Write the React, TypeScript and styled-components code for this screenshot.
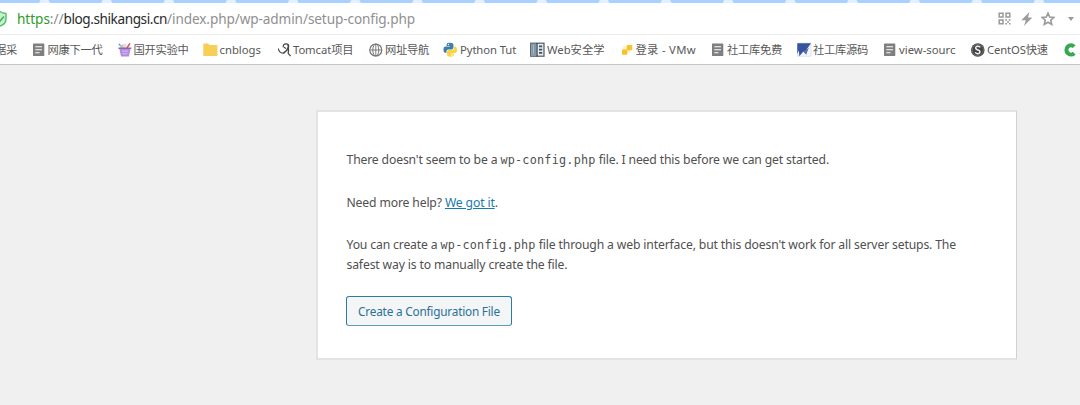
import React from "react";
import styled, { createGlobalStyle } from "styled-components";

const Global = createGlobalStyle`
  * { box-sizing: border-box; }
  body { margin: 0; background: #f0f0f0; overflow: hidden; font-family: "Noto Sans", "Noto Sans CJK SC", sans-serif; }
`;
const Page = styled.div`
  width: 1080px;
  height: 405px;
  overflow: hidden;
  background: #f0f0f0;
`;
const TabStrip = styled.div`
  height: 3px;
  background: #e3f0ff;
  svg { display: block; }
`;
const AddressBar = styled.div`
  height: 32px;
  display: flex;
  align-items: center;
  justify-content: space-between;
  background: #fff;
  border-bottom: 1px solid #ebebeb;
  padding-right: 6px;
`;
const AddressLeft = styled.div`
  display: flex;
  align-items: center;
`;
const Url = styled.div`
  margin-left: 10px;
  font-size: 13.6px;
  line-height: 20px;
  white-space: nowrap;
`;
const UrlPart = styled.span<{ $color: string; $track: number }>`
  color: ${(p) => p.$color};
  letter-spacing: ${(p) => p.$track}px;
`;
const Actions = styled.div`
  display: flex;
  align-items: center;
`;
const Bookmarks = styled.div`
  height: 30px;
  display: flex;
  align-items: center;
  background: #fff;
  border-bottom: 1px solid #c6c6c6;
`;
const Bookmark = styled.div<{ $width: number }>`
  flex: 0 0 ${(p) => p.$width}px;
  display: flex;
  align-items: center;
`;
const IconSlot = styled.span<{ $width: number }>`
  flex: 0 0 ${(p) => p.$width}px;
  height: 16px;
  display: flex;
  align-items: center;
`;
const Label = styled.span<{ $track: number }>`
  font-size: 11.3px;
  line-height: 16px;
  white-space: nowrap;
  color: #585858;
  letter-spacing: ${(p) => p.$track}px;
`;
const ScrolledLabel = styled(Label)`
  margin-left: -5px;
`;
const Card = styled.main`
  width: 701px;
  height: 250px;
  margin: 45px 0 0 316px;
  padding: 37px 29px 0 28px;
  background: #fff;
  border: 2px solid #e1e3e4;
  border-right: 1px solid #cfd2d4;
`;
const Paragraph = styled.p<{ $gap: number; $line?: number; $track?: number }>`
  margin: 0 0 ${(p) => p.$gap}px 0.5px;
  font-size: 12.2px;
  line-height: ${(p) => p.$line ?? 21}px;
  letter-spacing: ${(p) => p.$track ?? -0.15}px;
  white-space: nowrap;
  color: #505050;
`;
const Code = styled.code`
  font-family: "DejaVu Sans Mono", monospace;
  font-size: 11.8px;
  line-height: 1;
  letter-spacing: 0.22px;
`;
const Link = styled.a`
  color: #1a7aae;
  text-decoration: underline;
`;
const Button = styled.button`
  display: block;
  width: 166px;
  height: 30px;
  padding: 0;
  border: 1px solid #2b7ca3;
  border-bottom-color: #5b9bb9;
  border-radius: 3px;
  background: #f3f5f7;
  color: #2a7196;
  font: 11.8px/28px "Noto Sans", sans-serif;
  letter-spacing: -0.21px;
  white-space: nowrap;
`;

const Tabs = () => (
  <svg width="1080" height="3">
    {Array.from({ length: 19 }, (_, i) => {
      const x = -12 + i * 62.15;
      return <path key={i} d={`M${x - 1.5} 0H${x + 52.5}L${x + 51} 3H${x}Z`} fill="#a9d1ff" />;
    })}
  </svg>
);
const Shield = () => (
  <svg width="7" height="18" viewBox="0 0 7 18">
    <path d="M-6 3Q-2 3 0 1.5Q2 3 6 3.5V9Q6 14 0 16Q-6 14-6 9Z" fill="#c8f0cf" stroke="#55be68" strokeWidth="1.4" />
    <path d="M-3 8L0 11L4 6.5" fill="none" stroke="#45b55a" strokeWidth="1.6" />
  </svg>
);
const QrIcon = () => (
  <svg width="13" height="13" viewBox="0 0 13 13" fill="none" stroke="#999" strokeWidth="1.5">
    <path d="M1.2 1.2H5V5H1.2ZM8 1.2H11.8V5H8ZM1.2 8H5V11.8H1.2Z" />
    <path d="M7.2 8H9M10.7 8H12.5M9 9.9H11M7.2 11.8H9M11 11.8H12.5" />
  </svg>
);
const Bolt = () => (
  <svg width="12" height="14" viewBox="0 0 12 14">
    <path d="M8.4 0L.3 8.2H4.8L3 14L11.3 5.4H7Z" fill="#9c9c9c" />
  </svg>
);
const Star = () => (
  <svg width="14" height="14" viewBox="0 0 14 14">
    <path d="M7 1.2L8.7 5L12.9 5.4L9.8 8.2L10.7 12.4L7 10.2L3.3 12.4L4.2 8.2L1.1 5.4L5.3 5Z" fill="none" stroke="#999" strokeWidth="1.6" />
  </svg>
);
const Caret = () => (
  <svg width="6" height="4" viewBox="0 0 6 4">
    <path d="M0 0H6L3 4Z" fill="#999" />
  </svg>
);

const DocIcon = () => (
  <svg width="12" height="16" viewBox="0 0 12 16">
    <rect x="0" y="1.5" width="11.3" height="12.6" rx=".6" fill="#7f7f7f" />
    <path d="M2.3 4.7H9M2.3 7.7H9M2.3 10.7H6.5" stroke="#fff" strokeWidth="1.1" />
  </svg>
);
const BasketIcon = () => (
  <svg width="14" height="16" viewBox="0 0 14 16">
    <path d="M.8 2L4 5M5 2.5L6 6" stroke="#76868f" strokeWidth="1.1" />
    <circle cx="3.5" cy="4.4" r="1.6" fill="#a9cdc8" />
    <circle cx="6.8" cy="3.8" r="2" fill="#f3d5da" />
    <path d="M8 6L11.3 1L12.5 1.7L10 6" fill="#d7515d" />
    <path d="M1.2 6H12.6L11 14.6H3Z" fill="#b18cdb" />
    <path d="M.5 5.5H13.3V7H.5Z" fill="#8a68ab" />
    <path d="M4 9.2H10M4.5 11.7H9.5" stroke="#cfb1f2" strokeWidth="1.3" />
  </svg>
);
const FolderIcon = () => (
  <svg width="15" height="16" viewBox="0 0 15 16">
    <path d="M.3 2.3Q.3 1.5 1 1.5H5.2L6.5 3H13.6Q14.4 3 14.4 3.8V14H.3Z" fill="#f6cf58" />
  </svg>
);
const TomcatIcon = () => (
  <svg width="14" height="16" viewBox="0 0 14 16" fill="none" stroke="#444">
    <path d="M.3 6.5C.8 9.6 3.2 11.4 6.5 11.2" strokeWidth="1.2" />
    <path d="M5.2 5.2Q5.2 1.8 8 1.8Q11 1.8 10.6 4.8Q9.5 8.6 5.4 11" strokeWidth="1.3" />
    <path d="M10 3Q11 8 10.2 11.4L12.6 14.2M6 5.2L8 6.5" strokeWidth="1.2" />
  </svg>
);
const GlobeIcon = () => (
  <svg width="14" height="16" viewBox="0 0 14 16" fill="none" stroke="#737373" strokeWidth="1">
    <circle cx="6.8" cy="8" r="6" strokeWidth="1.2" />
    <ellipse cx="6.8" cy="8" rx="3" ry="6" />
    <path d="M.8 8H12.8M6.8 2V14" strokeWidth=".9" />
  </svg>
);
const PythonIcon = () => (
  <svg width="15" height="16" viewBox="0 0 15 16">
    <path d="M3.6 4V2.2Q3.8.8 7 .8Q10.3.8 10.4 2.5V5.8Q10.4 7.5 8.5 7.5H5.3Q3.5 7.5 3.5 9.4V10.8H2Q.4 10.5.4 7.4Q.4 4.6 2.2 4.4H7V4Z" fill="#3f7dac" />
    <path d="M11 4.4H12.3Q14.1 4.8 14.1 7.8Q14.1 10.8 12.4 11H7.4V11.5H10.8V13Q10.6 14.7 7.4 14.7Q4 14.7 4 12.8V10Q4 8.1 5.8 8.1H9.2Q11 7.9 11 6Z" fill="#fcd43e" />
    <circle cx="5.5" cy="2.5" r=".7" fill="#fff" />
    <circle cx="8.9" cy="13" r=".7" fill="#fff" />
  </svg>
);
const BookIcon = () => (
  <svg width="15" height="16" viewBox="0 0 15 16">
    <rect x=".7" y="1.2" width="13.3" height="13" fill="#e7edf0" stroke="#4b5b67" strokeWidth="1.2" />
    <path d="M1.2 1.8H6.3V13.8H1.2Z" fill="#8199a9" />
    <path d="M7 1V14.5" stroke="#34434e" strokeWidth="1.3" />
    <path d="M9 4.4H12.2M9 7.6H12.2M9 10.8H12.2" stroke="#3f505c" strokeWidth="1.7" />
    <path d="M3.5 3V12" stroke="#a3b7c4" />
  </svg>
);
const VmIcon = () => (
  <svg width="11" height="16" viewBox="0 0 11 16">
    <path d="M1 4.3H5V8H1ZM5 8H8.3V11H5Z" fill="#fff0c2" />
    <rect x="4.8" y="3" width="5.4" height="5.2" rx=".6" fill="#fac22a" />
    <rect x="0" y="7.6" width="5.3" height="5.2" rx=".6" fill="#fac22a" />
  </svg>
);
const FlagIcon = () => (
  <svg width="15" height="16" viewBox="0 0 15 16">
    <path d="M.5 1.2H14V14.2H.5Z" fill="#f5f7fc" stroke="#d3d9e6" strokeWidth=".8" />
    <path d="M.3 1.3H14L9.6 7.5L9.2 12.4L6.4 9.5L2.3 14.2L1.9 8.5L.3 12Z" fill="#35549d" />
    <path d="M6.4 9.5L9.6 7.5L12 5.5L9.2 12.4Z" fill="#5a73b0" />
  </svg>
);
const CentosIcon = () => (
  <svg width="14" height="16" viewBox="0 0 14 16">
    <circle cx="6.8" cy="8" r="6.8" fill="#454545" />
    <circle cx="6.8" cy="8" r="5.6" fill="none" stroke="#808080" strokeWidth=".7" />
    <path d="M9.2 5.4Q8.4 4 6.4 4.3Q4.2 4.8 4.8 6.6Q5.2 7.5 7 8Q9.2 8.6 9 10Q8.6 11.9 6.4 11.8Q4.9 11.6 4.3 10.3" fill="none" stroke="#f0f0f0" strokeWidth="1.4" />
  </svg>
);
const GreenIcon = () => (
  <svg width="15" height="16" viewBox="0 0 15 16">
    <path d="M11.2 4.6A4.6 4.6 0 1 0 11.2 11.2" fill="none" stroke="#36a852" strokeWidth="4" />
    <path d="M8.6 6.3H13.2V9.6H8.6Z" fill="#fff" />
  </svg>
);

type Item = { icon: React.ReactNode; slot: number; width: number; label: string; track: number };
const items: Item[] = [
  { icon: <DocIcon />, slot: 14.5, width: 85, label: "网康下一代", track: -0.3 },
  { icon: <BasketIcon />, slot: 15.5, width: 85, label: "国开实验中", track: -0.3 },
  { icon: <FolderIcon />, slot: 16.5, width: 75, label: "cnblogs", track: 0 },
  { icon: <TomcatIcon />, slot: 15, width: 91, label: "Tomcat项目", track: -0.1 },
  { icon: <GlobeIcon />, slot: 16, width: 74, label: "网址导航", track: -0.3 },
  { icon: <PythonIcon />, slot: 17, width: 87, label: "Python Tut", track: -0.1 },
  { icon: <BookIcon />, slot: 17, width: 92, label: "Web安全学", track: 0 },
  { icon: <VmIcon />, slot: 13.5, width: 90, label: "登录 - VMw", track: 0.3 },
  { icon: <DocIcon />, slot: 15, width: 85, label: "社工库免费", track: -0.3 },
  { icon: <FlagIcon />, slot: 16, width: 87, label: "社工库源码", track: -0.3 },
  { icon: <DocIcon />, slot: 15, width: 87, label: "view-sourc", track: 0 },
  { icon: <CentosIcon />, slot: 16, width: 92, label: "CentOS快速", track: -0.15 },
  { icon: <GreenIcon />, slot: 16, width: 40, label: "人", track: 0 },
];

export default function App() {
  return (
    <Page>
      <Global />
      <TabStrip><Tabs /></TabStrip>
      <AddressBar>
        <AddressLeft>
          <Shield />
          <Url>
            <UrlPart $color="#2d9b2d" $track={-0.05}>https</UrlPart>
            <UrlPart $color="#8c8c8c" $track={-0.05}>://</UrlPart>
            <UrlPart $color="#2a2a2a" $track={-0.42}>blog.shikangsi.cn</UrlPart>
            <UrlPart $color="#909090" $track={-0.1}>/index.php/wp-admin/setup-config.php</UrlPart>
          </Url>
        </AddressLeft>
        <Actions>
          <IconSlot $width={23}><QrIcon /></IconSlot>
          <IconSlot $width={20.5}><Bolt /></IconSlot>
          <IconSlot $width={27}><Star /></IconSlot>
          <Caret />
        </Actions>
      </AddressBar>
      <Bookmarks>
        <Bookmark $width={33}><ScrolledLabel $track={-0.3}>据采</ScrolledLabel></Bookmark>
        {items.map((b, i) => (
          <Bookmark key={i} $width={b.width}>
            <IconSlot $width={b.slot}>{b.icon}</IconSlot>
            <Label $track={b.track}>{b.label}</Label>
          </Bookmark>
        ))}
      </Bookmarks>
      <Card>
        <Paragraph $gap={22}>
          There doesn't seem to be a <Code>wp-config.php</Code> file. I need this before we can get started.
        </Paragraph>
        <Paragraph $gap={22}>
          Need more help? <Link>We got it</Link>.
        </Paragraph>
        <Paragraph $gap={21} $line={20}>
          You can create a <Code>wp-config.php</Code> file through a web interface, but this doesn't work for all server setups. The
          <br />
          safest way is to manually create the file.
        </Paragraph>
        <Button>Create a Configuration File</Button>
      </Card>
    </Page>
  );
}
